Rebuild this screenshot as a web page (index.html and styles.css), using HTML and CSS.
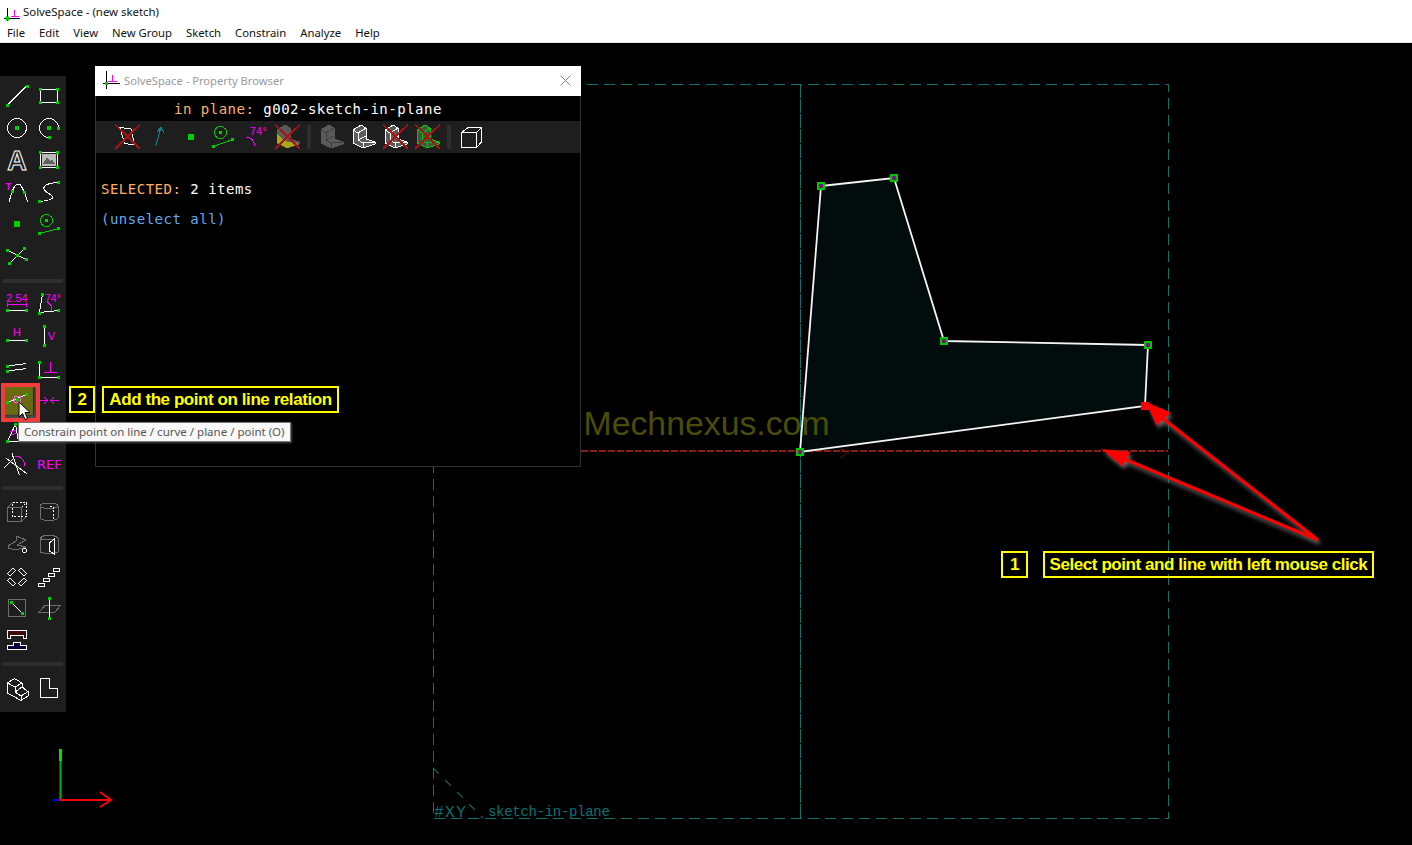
FILE: index.html
```html
<!DOCTYPE html>
<html lang="en">
<head>
<meta charset="utf-8">
<title>SolveSpace - (new sketch)</title>
<link rel="stylesheet" href="styles.css">
</head>
<body>
<header class="chrome">
  <div class="titlebar">
    <svg class="appicon" viewBox="0 0 18 18"><path class="k" d="M5.500 5V18M2 15.500H18"/><path class="m" d="M12.500 7V13M9 13.500H17"/><rect class="g" x="3.500" y="13.500" width="4" height="4"/></svg>
    <span>SolveSpace - (new sketch)</span>
  </div>
  <nav class="menubar">
    <span>File</span><span>Edit</span><span>View</span><span>New Group</span><span>Sketch</span><span>Constrain</span><span>Analyze</span><span>Help</span>
  </nav>
</header>

<main class="viewport">
  <svg class="scene" viewBox="0 43 1412 802">
    <g class="teal">
      <path d="M433.500 84.500H1168.500V818.500H433.500Z"/>
      <path class="teal-axis" d="M800.500 84V818"/>
    </g>
    <path class="teal-diag" d="M433 768L483 818"/>
    <text class="tag-xy" x="434" y="817">#XY</text>
    <text class="tag-name" x="488" y="816">sketch-in-plane</text>
    <path class="refline" d="M581 451H1168"/>
    <path class="refmark" d="M840 449L850 451L840 458"/>
    <polygon class="face" points="821,186 894,178 944,341 1148,345 1145,406 800,452"/>
    <text class="watermark" x="583.500" y="435">Mechnexus.com</text>
    <polygon class="edge" points="821,186 894,178 944,341 1148,345 1145,406 800,452"/>
    <g class="vertex">
      <rect x="817" y="182" width="8" height="8"/><rect x="890" y="174" width="8" height="8"/><rect x="940" y="337" width="8" height="8"/><rect x="1144" y="341" width="8" height="8"/><rect x="796" y="448" width="8" height="8"/>
    </g>
    <g class="vertex-dot">
      <rect x="819" y="184" width="4" height="4" rx="1"/><rect x="892" y="176" width="4" height="4" rx="1"/><rect x="942" y="339" width="4" height="4" rx="1"/><rect x="1146" y="343" width="4" height="4" rx="1"/><rect x="798" y="450" width="4" height="4" rx="1"/>
    </g>
    <rect class="picked" x="1141" y="402" width="8" height="8"/>
    <g class="arrow">
      <path d="M1318 540L1161 417M1318 540L1122 458"/>
      <polygon points="1149,405 1168,413 1157,423"/>
      <polygon points="1106,451 1128,453 1122,464"/>
    </g>
    <path class="axis-y" d="M60.500 800V749"/>
    <path class="axis-y-tip" d="M60.500 761V749"/>
    <path class="axis-z" d="M53 800H60"/>
    <path class="axis-x" d="M60 800H111M100 792L111 800L100 807"/>
  </svg>

  <aside class="toolbar">
    <div class="tools">
      <svg class="ico" viewBox="0 0 32 32"><path class="w" d="M6.500 25L25.500 6"/><rect class="g" x="5" y="24" width="3" height="3"/><rect class="g" x="25" y="5" width="3" height="3"/></svg>
      <svg class="ico" viewBox="0 0 32 32"><rect class="w" x="7.500" y="9.500" width="17" height="13"/><rect class="g" x="6" y="8" width="3" height="3"/><rect class="g" x="23" y="8" width="3" height="3"/><rect class="g" x="6" y="21" width="3" height="3"/><rect class="g" x="23" y="21" width="3" height="3"/></svg>
      <svg class="ico" viewBox="0 0 32 32"><circle class="w" cx="16" cy="16" r="9.500"/><rect class="g" x="14" y="14" width="4" height="4"/></svg>
      <svg class="ico" viewBox="0 0 32 32"><path class="w" d="M25.500 16A9.500 9.500 0 1 0 16 25.500"/><rect class="g" x="14" y="14" width="4" height="4"/><rect class="g" x="24" y="15" width="3" height="3"/><rect class="g" x="15" y="24" width="3" height="3"/></svg>
      <svg class="ico" viewBox="0 0 32 32"><text class="tool-a" x="16" y="26">A</text></svg>
      <svg class="ico" viewBox="0 0 32 32"><rect class="w" x="7.500" y="8.500" width="17" height="15"/><rect class="gray-f" x="9" y="10" width="14" height="12"/><path class="k-f" d="M10 20L14 13L17 17L19 15L22 20Z"/><rect class="g" x="6" y="7" width="3" height="3"/><rect class="g" x="23" y="7" width="3" height="3"/><rect class="g" x="6" y="22" width="3" height="3"/><rect class="g" x="23" y="22" width="3" height="3"/></svg>
      <svg class="ico" viewBox="0 0 32 32"><path class="w" d="M8 26C10 20 12 8 17 8C22 8 24 20 27 26"/><rect class="g" x="10" y="14" width="3" height="3"/><rect class="g" x="22" y="15" width="3" height="3"/><text class="tx-t" x="4.500" y="14">T</text></svg>
      <svg class="ico" viewBox="0 0 32 32"><path class="w" d="M25.500 6.500C16 7 10 9 11 13C12 17 19 18 20 21C20 24 12 25 6.500 25.500"/><rect class="g" x="24" y="5" width="3" height="3"/><rect class="g" x="5" y="24" width="3" height="3"/></svg>
      <svg class="ico" viewBox="0 0 32 32"><rect class="g" x="13" y="13" width="6" height="6"/></svg>
      <svg class="ico" viewBox="0 0 32 32"><circle class="gl" cx="13.500" cy="12.500" r="6"/><rect class="g" x="12" y="11" width="3" height="3"/><path class="gl" d="M6.500 25.500L25.500 20.500"/><rect class="g" x="5" y="24" width="3" height="3"/><rect class="g" x="24" y="19" width="3" height="3"/></svg>
      <svg class="ico" viewBox="0 0 32 32"><path class="w" d="M6.500 10.500L25.500 19.500M23.500 8.500L8.500 23.500"/><rect class="g" x="5" y="9" width="3" height="3"/><rect class="g" x="22" y="7" width="3" height="3"/><rect class="g" x="24" y="18" width="3" height="3"/><rect class="g" x="7" y="22" width="3" height="3"/><rect class="g" x="15" y="14" width="3" height="3"/></svg>
      <span class="ico"></span>
    </div>
    <div class="sep sep-first"></div>
    <div class="tools">
      <svg class="ico" viewBox="0 0 32 32"><text class="tx-d" x="16" y="15">2.54</text><path class="m" d="M6.500 16V20M25.500 16V20M6.500 17.500H25.500"/><path class="w" d="M6.500 23.500H25.500"/><rect class="g" x="5" y="22" width="3" height="3"/><rect class="g" x="24" y="22" width="3" height="3"/></svg>
      <svg class="ico" viewBox="0 0 32 32"><path class="w" d="M9.500 7.500L6.500 25.500L25.500 23.500"/><path class="m" d="M14 15C18 17 19 21 18.500 24.500"/><text class="tx-ang" x="12" y="14.500">74°</text><rect class="g" x="8" y="6" width="3" height="3"/><rect class="g" x="5" y="25" width="3" height="3"/><rect class="g" x="24" y="22" width="3" height="3"/></svg>
      <svg class="ico" viewBox="0 0 32 32"><text class="tx-h" x="16" y="17">H</text><path class="w" d="M6.500 21.500H25.500"/><rect class="g" x="5" y="20" width="3" height="3"/><rect class="g" x="24" y="20" width="3" height="3"/></svg>
      <svg class="ico" viewBox="0 0 32 32"><text class="tx-h" x="18.500" y="21">V</text><path class="w" d="M11.500 7.500V26"/><rect class="g" x="10" y="6" width="3" height="3"/><rect class="g" x="10" y="25" width="3" height="3"/></svg>
      <svg class="ico" viewBox="0 0 32 32"><path class="w" d="M6.500 15L25.500 12.500M6.500 20L25.500 17.500"/><rect class="g" x="5" y="14" width="3" height="3"/><rect class="g" x="5" y="19" width="3" height="3"/></svg>
      <svg class="ico" viewBox="0 0 32 32"><path class="w" d="M6.500 11.500V26.500H25.500"/><path class="m" d="M17.500 11V21M11 21.500H24"/><rect class="g" x="5" y="10" width="3" height="3"/><rect class="g" x="5" y="25" width="3" height="3"/><rect class="g" x="24" y="25" width="3" height="3"/></svg>
      <span class="ico ico-hover">
        <svg class="ico" viewBox="0 0 32 32"><path class="w" d="M6.500 19.500L25.500 11.500"/><rect class="pink" x="13.500" y="13.500" width="6" height="6"/><rect class="g" x="15" y="15" width="3" height="3"/><rect class="g" x="5" y="18" width="3" height="3"/><rect class="g" x="24" y="10" width="3" height="3"/></svg>
      </span>
      <svg class="ico" viewBox="0 0 32 32"><path class="m" d="M6 17.500H14M11 14L14.500 17.500L11 21M26 17.500H18M21 14L17.500 17.500L21 21"/></svg>
      <svg class="ico" viewBox="0 0 32 32"><path class="w" d="M14.500 9L6.500 26.500H17.500Z"/><path class="m" d="M9 17L15 15M10 20L16 18"/><rect class="g" x="13" y="8" width="3" height="3"/><rect class="g" x="5" y="25" width="3" height="3"/></svg>
      <span class="ico"></span>
      <svg class="ico" viewBox="0 0 32 32"><path class="w" d="M5.500 11.500L26 27M11 6.500L18.500 28M12 12L3 21"/><path class="m" d="M14 9C20 9 24 14 24 19"/></svg>
      <svg class="ico" viewBox="0 0 32 32"><text class="tx-ref" x="4" y="21.500">REF</text></svg>
    </div>
    <div class="sep sep-mid"></div>
    <div class="tools">
      <svg class="ico" viewBox="0 0 32 32"><path class="d" d="M6.500 11.500H20.500V25.500H6.500ZM6.500 11.500L11.500 6.500M20.500 25.500L25.500 20.500"/><path class="wd" d="M11.500 6.500H25.500V20.500H11.500ZM20.500 11.500L25.500 6.500"/></svg>
      <svg class="ico" viewBox="0 0 32 32"><path class="d" d="M7 10V22C7 25 25 25 25 22V10C25 6 7 6 7 10C7 13 25 13 25 10"/><path class="wd" d="M17 10H20V25"/></svg>
      <svg class="ico" viewBox="0 0 32 32"><path class="d" d="M7 18L15 13V8L25 12L16 17L25 19L15 22L7 20Z"/><circle class="w" cx="23.500" cy="22.500" r="2"/></svg>
      <svg class="ico" viewBox="0 0 32 32"><path class="d" d="M7 10V24C12 26 20 26 25 24V10C20 6 12 6 7 10C10 13 18 12 20 11"/><path class="w" d="M16.500 15L21 11V26L16.500 23Z"/></svg>
      <svg class="ico" viewBox="0 0 32 32"><g class="w"><rect x="6.500" y="10" width="8" height="4" transform="rotate(-45 10.500 12)"/><rect x="17.500" y="10" width="8" height="4" transform="rotate(45 21.500 12)"/><rect x="6.500" y="20" width="8" height="4" transform="rotate(45 10.500 22)"/><rect x="17.500" y="20" width="8" height="4" transform="rotate(-45 21.500 22)"/></g></svg>
      <svg class="ico" viewBox="0 0 32 32"><g class="w"><rect x="5.500" y="23.500" width="6" height="3"/><rect x="10.500" y="18.500" width="6" height="3"/><rect x="15.500" y="13.500" width="6" height="3"/><rect x="20.500" y="8.500" width="6" height="3"/></g></svg>
      <svg class="ico" viewBox="0 0 32 32"><rect class="d" x="7.500" y="7.500" width="17" height="17"/><path class="w" d="M10.500 10.500L21.500 21.500"/><rect class="g" x="9" y="9" width="3" height="3"/><rect class="g" x="20" y="20" width="3" height="3"/></svg>
      <svg class="ico" viewBox="0 0 32 32"><path class="d" d="M5.500 20.500H21.500L27.500 13.500H12Z"/><path class="w" d="M16.500 7V26"/><rect class="g" x="15" y="5" width="3" height="3"/><rect class="g" x="15" y="25" width="3" height="3"/></svg>
      <svg class="ico" viewBox="0 0 32 32"><path class="w-red" d="M6.500 6.500H25.500V14.500H22.500V11H9.500V14.500H6.500Z"/><path class="w-blue" d="M6.500 25.500V21.500H12V18H19V21.500H25.500V25.500Z"/></svg>
      <span class="ico"></span>
    </div>
    <div class="sep"></div>
    <div class="tools">
      <svg class="ico" viewBox="0 0 32 32"><path class="w" d="M6.500 11L13.500 6.500L21 11V15L27 19.500V24L20 28.500L6.500 21ZM6.500 11L14 15L21 11M14 15V20L20 24V28.500M20 24L27 19.500M14 20L21 15"/></svg>
      <svg class="ico" viewBox="0 0 32 32"><path class="w" d="M7.500 6.500H16.500V16.500H24.500V25.500H7.500Z"/></svg>
    </div>
  </aside>

  <section class="browser">
    <div class="browser-title">
      <svg class="appicon-sm" viewBox="0 0 18 18"><path class="k" d="M3.500 0V18M0 12.500H17"/><path class="m" d="M9.500 4V10M5 10.500H14"/><rect class="g" x="2" y="11" width="3" height="3"/></svg>
      <span class="browser-name">SolveSpace - Property Browser</span>
      <svg class="closex" viewBox="0 0 11 11"><path d="M0.500 0.500L10.500 10.500M10.500 0.500L0.500 10.500"/></svg>
    </div>
    <div class="in-plane"><span class="orange">in plane:</span> g002-sketch-in-plane</div>
    <div class="browser-tools">
      <svg class="ico" viewBox="0 0 32 32"><path class="w" d="M9 6.500L20 8L23.500 24L13.500 22.500Z"/><path class="xred" d="M4 3.500L29 28M29 3.500L4 28"/></svg>
      <svg class="ico" viewBox="0 0 32 32"><path class="tl" d="M12.500 25.500L18 6M14 11L18 6L21 12"/></svg>
      <svg class="ico" viewBox="0 0 32 32"><rect class="g" x="13" y="13" width="6" height="6"/></svg>
      <svg class="ico" viewBox="0 0 32 32"><circle class="gl" cx="13.500" cy="11.500" r="6"/><rect class="g" x="12" y="10" width="3" height="3"/><path class="gl" d="M6.500 25.500L25.500 18.500"/><rect class="g" x="5" y="24" width="3" height="3"/><rect class="g" x="24" y="17" width="3" height="3"/></svg>
      <svg class="ico" viewBox="0 0 32 32"><text class="tx-ang" x="11" y="14">74°</text><path class="m" d="M7 16C12 16 15 20 16 25"/></svg>
      <svg class="ico" viewBox="0 0 32 32"><path class="solid" d="M6 9L14 4L19 7V18L28 21V23L16 27L6 22Z"/><path class="hatch" d="M6 13L14 20L28 23L16 27L6 22Z"/><path class="xred" d="M4 3.500L29 28M29 3.500L4 28"/></svg>
      <i class="vsep"></i>
      <svg class="ico" viewBox="0 0 32 32"><path class="solid" d="M6 9L14 4L19 7V18L28 21V23L16 27L6 22Z"/><path class="solid-line" d="M6 9L11 12V19L16 22V27M11 12L19 7M11 19L19 15M16 22L28 21"/></svg>
      <svg class="ico" viewBox="0 0 32 32"><path class="solid-w" d="M6 9L14 4L19 7V18L28 21V23L16 27L6 22Z"/><path class="wl" d="M6 9L11 12V19L16 22V27M11 12L19 7M11 19L19 15M16 22L28 21"/></svg>
      <svg class="ico" viewBox="0 0 32 32"><path class="solid-w" d="M6 9L14 4L19 7V18L28 21V23L16 27L6 22Z"/><path class="wl" d="M6 9L11 12V19L16 22V27M11 12L19 7M11 19L19 15M16 22L28 21"/><path class="xred" d="M4 3.500L29 28M29 3.500L4 28"/></svg>
      <svg class="ico" viewBox="0 0 32 32"><path class="solid-g" d="M6 9L14 4L19 7V18L28 21V23L16 27L6 22Z"/><path class="gl" d="M6 9L11 12V19L16 22V27M11 12L19 7M11 19L19 15M16 22L28 21"/><path class="xred" d="M4 3.500L29 28M29 3.500L4 28"/></svg>
      <i class="vsep"></i>
      <svg class="ico" viewBox="0 0 32 32"><path class="w" d="M6.500 11.500H21.500V26.500H6.500ZM6.500 11.500L13 6.500H26.500V21L21.500 26.500M21.500 11.500L26.500 6.500"/></svg>
    </div>
    <p class="prop"><span class="orange">SELECTED:</span> 2 items</p>
    <p class="prop link">(unselect all)</p>
  </section>

  <div class="callout num-2">2</div>
  <div class="callout text-2">Add the point on line relation</div>
  <div class="callout num-1">1</div>
  <div class="callout text-1">Select point and line with left mouse click</div>

  <div class="hover-ring"></div>
  <div class="tooltip">Constrain point on line / curve / plane / point (O)</div>
  <svg class="cursor" viewBox="0 0 14 20"><path d="M1 1V16L4.500 12.500L7 18.500L9.500 17.500L7 11.500H12Z"/></svg>
</main>
</body>
</html>
```

FILE: styles.css
```css
* { box-sizing: border-box; }
html, body { margin: 0; height: 845px; overflow: hidden; background: #000; }
body { font-family: "Noto Sans", "Liberation Sans", sans-serif; }

.chrome { height: 43px; background: #fff; color: #111; font-size: 11.400px; border-bottom: 1px solid #e8e8e8; }
.titlebar { height: 23px; display: flex; align-items: center; gap: 3px; padding-left: 2px; }
.appicon { width: 18px; height: 18px; flex: none; }
.menubar { height: 19px; display: flex; align-items: center; gap: 14px; padding-left: 7px; font-size: 11.300px; }

.viewport { position: relative; height: 802px; background: #000; }
.scene { position: absolute; inset: 0; width: 1412px; height: 802px; }

.teal { fill: none; stroke: #0b7272; stroke-width: 1; stroke-dasharray: 11 6; shape-rendering: crispEdges; }
.teal-axis { stroke-dasharray: 14 1; }
.teal-diag { fill: none; stroke: #0b6a6a; stroke-width: 1.200; stroke-dasharray: 8 9; }
.tag-xy { font: 16px "Liberation Mono", monospace; letter-spacing: 1.500px; fill: #0b7272; }
.tag-name { font: 14px "Liberation Mono", monospace; letter-spacing: -0.300px; fill: #0b7272; }
.refline { stroke: #8a1c1c; stroke-width: 2; stroke-dasharray: 7 2; fill: none; }
.refmark { stroke: #5a1010; stroke-width: 1; fill: none; }
.face { fill: #020c0d; }
.edge { fill: none; stroke: #f4f4f4; stroke-width: 1.800; }
.watermark { font: 33.800px "Liberation Sans", sans-serif; fill: #4c4c09; }
.vertex rect { fill: #00c800; }
.vertex-dot rect { fill: #7d0f8a; }
.picked { fill: #ff0000; }
.arrow { fill: #ff0000; stroke: #ff0000; stroke-width: 3; filter: drop-shadow(2px 3px 2px #6a6a6a); }
.axis-y { stroke: #00b400; stroke-width: 2; }
.axis-y-tip { stroke: #00e000; stroke-width: 3; }
.axis-z { stroke: #0000ff; stroke-width: 2; }
.axis-x { stroke: #ff0000; stroke-width: 2; fill: none; }

.toolbar { position: absolute; left: 0; top: 33px; width: 66px; height: 636px; background: #1e1e1e; padding: 4px 1px 0; }
.tools { display: grid; grid-template-columns: 32px 32px; grid-auto-rows: 32px; }
.sep { height: 4px; margin: 6px 2px; background: #2e2e2e; }
.sep-first { margin: 7px 2px 4px; }
.sep-mid { margin: 7px 2px 6px; }
.ico { display: block; width: 32px; height: 32px; shape-rendering: crispEdges; }
.ico-hover { background: #6a6a10; position: relative; }

.w, .wl, .wd, .d, .m, .k, .gl, .tl, .xred, .w-red, .w-blue, .solid-line { fill: none; stroke-width: 1; }
.w { stroke: #fff; }
.wl { stroke: #fff; }
.wd { stroke: #fff; stroke-dasharray: 2 1.500; }
.d { stroke: #6e6e6e; }
.m { stroke: #ff00ff; }
.k { stroke: #000; }
.gl { stroke: #00c800; }
.tl { stroke: #0a8a94; }
.g { fill: #00d000; }
.pink { fill: none; stroke: #ff60d0; stroke-width: 1; }
.gray-f { fill: #b9b9b9; }
.k-f { fill: #5e5e5e; }
.w-red { stroke: #fff; fill: #3c0a0a; }
.w-blue { stroke: #fff; fill: #05053c; }
.xred { stroke: #a81414; stroke-width: 2; }
.solid { fill: #5a5a5a; stroke: #5a5a5a; }
.solid-line { stroke: #3e3e3e; }
.solid-w { fill: #5c5c5c; stroke: #fff; }
.solid-g { fill: #3d5a3d; stroke: #00d000; }
.hatch { fill: #a8a818; }

.tool-a { font: bold 27px "Liberation Sans", sans-serif; text-anchor: middle; fill: none; stroke: #fff; stroke-width: 1; }
.tx-t { font: bold 10px "Liberation Mono", monospace; fill: #ff00ff; }
.tx-d { font: 11px "Liberation Sans", sans-serif; text-anchor: middle; fill: #ff00ff; }
.tx-ang { font: 10.500px "Liberation Sans", sans-serif; fill: #ff00ff; }
.tx-h { font: 11px "Liberation Sans", sans-serif; text-anchor: middle; fill: #ff00ff; }
.tx-ref { font: 13px "DejaVu Sans", sans-serif; fill: #ff00ff; }

.browser { position: absolute; left: 95px; top: 23px; width: 486px; height: 401px; background: #000; border: 1px solid #333; border-top: 0; color: #fff; font: 14px "DejaVu Sans Mono", monospace; letter-spacing: .5px; }
.browser-title { height: 30px; margin: 0 -1px; background: #fff; display: flex; align-items: center; padding: 0 10px 2px 8px; font: 11.200px "Noto Sans", "Liberation Sans", sans-serif; letter-spacing: 0; color: #9a9a9a; }
.appicon-sm { width: 18px; height: 18px; flex: none; margin-right: 3px; }
.browser-name { flex: 1; }
.closex { width: 11px; height: 11px; }
.closex path { stroke: #808080; fill: none; stroke-width: 1; }
.in-plane { height: 25px; padding-left: 78px; line-height: 26px; white-space: pre; }
.orange { color: #ffb066; }
.browser-tools { height: 32px; background: #1e1e1e; display: flex; padding-left: 15px; }
.vsep { width: 4px; height: 24px; margin: 4px 4px 0; background: #2e2e2e; flex: none; }
.prop { margin: 0; padding: 0 0 0 5px; height: 30px; line-height: 30px; }
.browser-tools + .prop { margin-top: 21px; }
.link { color: #66a8f0; }

.callout { position: absolute; border: 2px solid #ffff00; color: #ffff00; font: bold 17px "Liberation Sans", sans-serif; letter-spacing: -.43px; display: flex; align-items: center; justify-content: center; white-space: nowrap; }
.num-2 { left: 69px; top: 343px; width: 26px; height: 27px; }
.text-2 { left: 102px; top: 343px; width: 237px; height: 27px; }
.num-1 { left: 1001px; top: 508px; width: 27px; height: 27px; }
.text-1 { left: 1043px; top: 508px; width: 331px; height: 27px; }

.hover-ring { position: absolute; left: 1px; top: 340px; width: 39px; height: 39px; border: 4px solid #f23c3c; box-shadow: inset -2px -3px 2px #4a4a4a; }
.tooltip { position: absolute; left: 18px; top: 379px; width: 273px; height: 20px; padding-left: 5px; background: #f8f8f8; border: 1px solid #777; box-shadow: 1px 1px 2px #444; color: #555; font-size: 11.500px; line-height: 18px; white-space: nowrap; }
.cursor { position: absolute; left: 18px; top: 358px; width: 14px; height: 20px; }
.cursor path { fill: #fff; stroke: #000; stroke-width: 1; }
```
